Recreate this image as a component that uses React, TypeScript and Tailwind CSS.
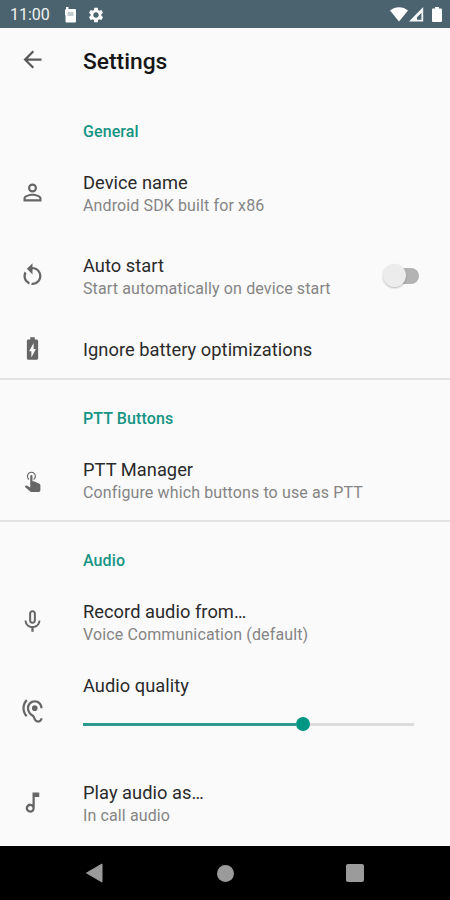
import React from 'react'
import {
  MdArrowBack,
  MdBatteryChargingFull,
  MdHearing,
  MdMicNone,
  MdOutlineMusicNote,
  MdPermIdentity,
  MdSettings,
} from 'react-icons/md'

const StatusBar = () => {
  return (
    <div className="h-7 bg-[#4b636e] flex items-center justify-between pl-[10px] pr-2 text-white">
      {/* LEFT */}
      <div className="flex items-center pt-px">
        <span className="w-[55px] pt-px text-[16px] leading-4 text-[#eef1f2]">11:00</span>
        <svg width="12" height="16" viewBox="0 0 12 16" className="mr-[10px]">
          <path d="M1 0h2.500v2H10a1 1 0 0 1 1 1v11.500a1 1 0 0 1-1 1H1.500a1 1 0 0 1-1-1V8.500L0 7.500V3l1-1z" fill="#fff" />
          <path d="M2.500 5h6v4h-6z" fill="#c3ccd0" />
        </svg>
        <MdSettings size={18} />
      </div>
      {/* RIGHT */}
      <div className="flex items-center">
        <svg width="18" height="15" viewBox="0 0 18 15">
          <path d="M0 3.600C5 -1 13 -1 18 3.600L9 14.600z" fill="#fff" />
        </svg>
        <svg width="15" height="15" viewBox="0 0 15 15" className="ml-px">
          <path d="M14.200 0v14.600H0z" fill="#f4f6f7" />
          <path d="M12.400 6v6.800H8V10.200z" fill="#4b636e" />
        </svg>
        <svg width="10" height="15" viewBox="0 0 10 15" className="ml-2">
          <path d="M3 0h4v1.500h2a1 1 0 0 1 1 1V14a1 1 0 0 1-1 1H1a1 1 0 0 1-1-1V2.500a1 1 0 0 1 1-1h2z" fill="#fff" />
        </svg>
      </div>
    </div>
  )
}

const TapIcon = () => {
  return (
    <svg width="27" height="27" viewBox="0 0 24 24" fill="currentColor">
      <path d="M10 9a1 1 0 0 1 2 0v4.470l1.210.130 4.940 2.190c.53.240.850.770.850 1.350v4.360c-.030.820-.680 1.470-1.500 1.500H11c-.380 0-.740-.150-1-.430l-4.900-4.200.740-.770c.190-.210.460-.320.740-.320h.220L10 19V9z" />
      <path d="M11 5a4 4 0 0 1 4 4c0 1.500-.800 2.770-2 3.460v-1.220A3 3 0 1 0 8 9c0 .890.390 1.690 1 2.240v1.220C7.800 11.770 7 10.500 7 9a4 4 0 0 1 4-4z" />
    </svg>
  )
}

const RestartIcon = () => {
  return (
    <svg width="27" height="27" viewBox="0 -0.5 24 24" fill="currentColor">
      <path d="M12 4c2.100 0 4.100.8 5.600 2.300 3.100 3.100 3.100 8.200 0 11.300-1.800 1.900-4.300 2.600-6.700 2.300l.5-2c1.700.2 3.500-.4 4.800-1.700 2.300-2.300 2.300-6.100 0-8.500C15.100 6.600 13.500 6 12 6v4.600l-5-5 5-5V4zM6.300 17.600C3.700 15 3.300 11 5.100 7.900l1.500 1.500c-1.100 2.200-.7 5 1.200 6.800.5.5 1.100.9 1.800 1.200l-.6 2c-1-.4-1.900-1-2.700-1.800z" />
    </svg>
  )
}

const Category = ({ title }: { title: string }) => {
  return (
    <div className="h-10 pl-[83px] pt-[11px] text-[16px] leading-5 font-medium tracking-[0.1px] text-[#159484]">
      {title}
    </div>
  )
}

type RowProps = {
  icon: React.ReactNode
  title: string
  summary?: string
  className?: string
  children?: React.ReactNode
}

const Row = ({ icon, title, summary, className = 'h-[83px]', children }: RowProps) => {
  return (
    <div className={`flex items-center ${className}`}>
      <div className="w-[83px] pl-[19px] text-[#666]">{icon}</div>
      <div className="flex-1 pt-[3px]">
        <p className="text-[18.3px] leading-[22px] tracking-[0.03px] text-[#2a2a2a]">{title}</p>
        {summary && (
          <p className="mt-px text-[16px] leading-[22px] tracking-[0.12px] text-[#858585]">{summary}</p>
        )}
      </div>
      {children}
    </div>
  )
}

const Switch = () => {
  return (
    <div className="relative mr-[31px] h-6 w-[36px]">
      <div className="absolute right-0 top-1 h-4 w-[30px] rounded-full bg-[#b3b3b3]" />
      <div className="absolute left-0 top-0 size-[23px] rounded-full bg-[#ececec] shadow-[0_1px_2px_rgba(0,0,0,0.25)]" />
    </div>
  )
}

const Slider = () => {
  return (
    <div className="flex h-4 w-[331px] items-center">
      <div className="h-[3px] w-[213px] bg-[#2c9a8c]" />
      <div className="size-[14px] rounded-full bg-[#009684]" />
      <div className="h-[3px] flex-1 bg-[#dcdcdc]" />
    </div>
  )
}

const NavBar = () => {
  return (
    <div className="flex h-[54px] items-center bg-black pl-[85px] text-[#9b9b9b]">
      <svg width="18" height="20" viewBox="0 0 18 20">
        <path d="M17 1v18L1.500 10z" fill="currentColor" stroke="currentColor" strokeLinejoin="round" />
      </svg>
      <div className="ml-[114px] size-[17px] rounded-full bg-[#9b9b9b]" />
      <div className="ml-[112px] size-[18px] rounded-[2px] bg-[#9b9b9b]" />
    </div>
  )
}

const App = () => {
  return (
    <div className="h-[900px] w-[450px] overflow-hidden bg-[#fafafa] font-['Roboto',sans-serif]">
      <StatusBar />
      {/* TOOLBAR */}
      <div className="flex h-[83px] pl-[19px] pt-[18px]">
        <MdArrowBack size={27} className="text-[#5a5a5a]" />
        <h1 className="ml-[37px] pt-px text-[22.8px] leading-[30px] font-medium text-[#161616]">Settings</h1>
      </div>
      {/* GENERAL */}
      <div className="h-[269px] border-b-2 border-[#e2e2e2]">
        <Category title="General" />
        <Row icon={<MdPermIdentity size={27} />} title="Device name" summary="Android SDK built for x86" />
        <Row icon={<RestartIcon />} title="Auto start" summary="Start automatically on device start">
          <Switch />
        </Row>
        <Row icon={<MdBatteryChargingFull size={27} />} title="Ignore battery optimizations" className="h-[62px]" />
      </div>
      {/* PTT BUTTONS */}
      <div className="h-[142px] border-b-2 border-[#e2e2e2] pt-[18px]">
        <Category title="PTT Buttons" />
        <Row icon={<TapIcon />} title="PTT Manager" summary="Configure which buttons to use as PTT" />
      </div>
      {/* AUDIO */}
      <div className="h-[324px] pt-[18px]">
        <Category title="Audio" />
        <Row icon={<MdMicNone size={27} />} title="Record audio from…" summary="Voice Communication (default)" />
        <div className="flex h-[98px]">
          <div className="w-[83px] pl-[19px] pt-[35px] text-[#666]">
            <MdHearing size={27} />
          </div>
          <div className="pt-[12px]">
            <p className="text-[18.3px] leading-[22px] tracking-[0.03px] text-[#2a2a2a]">Audio quality</p>
            <div className="mt-[19px]">
              <Slider />
            </div>
          </div>
        </div>
        <Row icon={<MdOutlineMusicNote size={27} />} title="Play audio as…" summary="In call audio" />
      </div>
      <NavBar />
    </div>
  )
}

export default App
